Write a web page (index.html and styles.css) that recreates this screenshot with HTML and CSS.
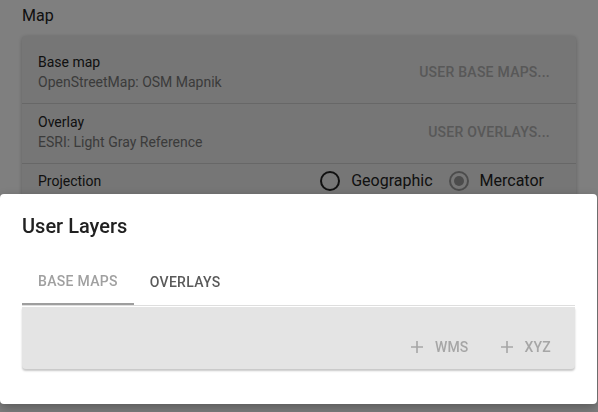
FILE: index.html
```html
<!DOCTYPE html>
<html>
<head>
<meta charset="utf-8">
<link rel="stylesheet" href="styles.css">
</head>
<body>
<div class="page">
  <div class="section-title">Map</div>
  <div class="card">
    <div class="row">
      <div class="texts">
        <div class="label">Base map</div>
        <div class="sub">OpenStreetMap: OSM Mapnik</div>
      </div>
      <div class="link-btn">User base maps...</div>
    </div>
    <div class="row">
      <div class="texts">
        <div class="label">Overlay</div>
        <div class="sub">ESRI: Light Gray Reference</div>
      </div>
      <div class="link-btn">User overlays...</div>
    </div>
    <div class="row row-proj">
      <div class="label">Projection</div>
      <div class="radios">
        <span class="radio"></span><span class="radio-label">Geographic</span>
        <span class="radio checked"></span><span class="radio-label">Mercator</span>
      </div>
    </div>
  </div>
</div>
<div class="overlay"></div>
<div class="dialog">
  <div class="dialog-title">User Layers</div>
  <div class="tabs">
    <div class="tab active">Base maps</div>
    <div class="tab">Overlays</div>
  </div>
  <div class="panel">
    <div class="pbtn"><svg class="plus" width="12" height="12" viewBox="0 0 12 12"><path d="M6 0v12M0 6h12" stroke="currentColor" stroke-width="1.6" fill="none"/></svg><span>WMS</span></div>
    <div class="pbtn"><svg class="plus" width="12" height="12" viewBox="0 0 12 12"><path d="M6 0v12M0 6h12" stroke="currentColor" stroke-width="1.6" fill="none"/></svg><span>XYZ</span></div>
  </div>
</div>
</body>
</html>
```

FILE: styles.css
```css
html, body {
  margin: 0;
  padding: 0;
  background: #ffffff;
  font-family: Roboto, "Liberation Sans", sans-serif;
  color: #222;
}
.page {
  padding: 4px 22px 0 22px;
  width: 554px;
}
.section-title {
  font-size: 16px;
  line-height: 24px;
  color: #222;
  margin-bottom: 8px;
}
.card {
  background: #ececec;
  border-radius: 4px;
  box-shadow: 0 1px 4px rgba(0,0,0,0.25);
  padding-top: 8px;
}
.row {
  display: flex;
  align-items: center;
  justify-content: space-between;
  padding: 8px 26px 11px 16px;
  border-bottom: 1px solid #cfcfcf;
}
.row-proj {
  border-bottom: none;
  padding-top: 5px;
  padding-right: 32px;
}
.label {
  font-size: 14px;
  line-height: 20px;
  color: #222;
}
.sub {
  font-size: 14px;
  line-height: 20px;
  color: #777;
}
.link-btn {
  font-size: 14px;
  font-weight: 500;
  text-transform: uppercase;
  letter-spacing: 0.25px;
  color: #b0b0b0;
}
.radios {
  display: flex;
  align-items: center;
}
.radio {
  box-sizing: border-box;
  width: 20px;
  height: 20px;
  border: 2px solid #222;
  border-radius: 50%;
  margin-right: 11px;
  position: relative;
}
.radio.checked {
  border-color: #999;
  margin-left: 16px;
}
.radio.checked::after {
  content: "";
  position: absolute;
  left: 3px;
  top: 3px;
  width: 10px;
  height: 10px;
  border-radius: 50%;
  background: #999;
}
.radio-label {
  font-size: 16px;
  line-height: 24px;
  color: #222;
}
.overlay {
  position: fixed;
  inset: 0;
  background: rgba(0,0,0,0.5);
}
.dialog {
  position: fixed;
  left: 0;
  top: 194px;
  width: 597px;
  height: 210px;
  background: #fff;
  border-radius: 4px;
  box-sizing: border-box;
  padding: 20px 22px 0 22px;
  overflow: hidden;
  box-shadow: 0 4px 12px rgba(0,0,0,0.3);
}
.dialog-title {
  font-size: 20px;
  font-weight: 500;
  line-height: 24px;
  color: #212121;
  margin-bottom: 19px;
}
.tabs {
  display: flex;
  border-bottom: 1px solid #dedede;
}
.tab {
  height: 48px;
  box-sizing: border-box;
  padding: 1px 16px 0 16px;
  display: flex;
  align-items: center;
  white-space: nowrap;
  font-size: 14px;
  font-weight: 500;
  text-transform: uppercase;
  letter-spacing: 0.3px;
  color: #5a5a5a;
}
.tab.active {
  color: #a0a0a0;
  border-bottom: 2px solid #9e9e9e;
}
.panel {
  margin-top: 1px;
  height: 62px;
  background: #e4e4e4;
  border-radius: 0 0 4px 4px;
  box-shadow: 0 2px 2px rgba(0,0,0,0.22);
  display: flex;
  justify-content: flex-end;
  align-items: flex-end;
  padding: 0 16px 4px 0;
  box-sizing: border-box;
  gap: 16px;
}
.pbtn {
  height: 36px;
  padding: 0 8px;
  display: flex;
  align-items: center;
  gap: 12px;
  font-size: 14px;
  font-weight: 500;
  letter-spacing: 0.2px;
  color: #a6a6a6;
}
.plus {
  display: block;
}
```
